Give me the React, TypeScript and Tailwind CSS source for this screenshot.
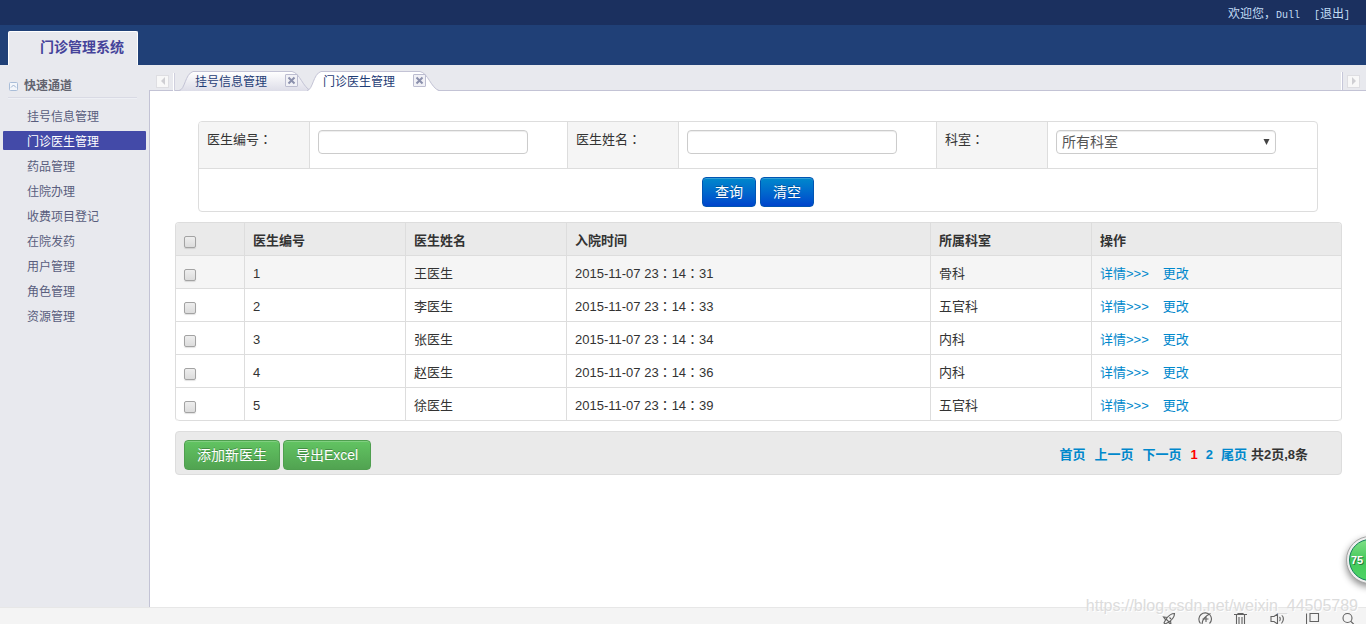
import React from 'react';

const navItems = [
  '挂号信息管理',
  '门诊医生管理',
  '药品管理',
  '住院办理',
  '收费项目登记',
  '在院发药',
  '用户管理',
  '角色管理',
  '资源管理',
];
const activeItem = '门诊医生管理';

const doctors = [
  { id: 1, name: '王医生', time: ['2015-11-07 23', '14', '31'], dept: '骨科' },
  { id: 2, name: '李医生', time: ['2015-11-07 23', '14', '33'], dept: '五官科' },
  { id: 3, name: '张医生', time: ['2015-11-07 23', '14', '34'], dept: '内科' },
  { id: 4, name: '赵医生', time: ['2015-11-07 23', '14', '36'], dept: '内科' },
  { id: 5, name: '徐医生', time: ['2015-11-07 23', '14', '39'], dept: '五官科' },
];

/* Full-width colon, centred in its cell */
function Colon() {
  return <span className="font-['Noto_Sans_CJK_TC',sans-serif] leading-none">：</span>;
}

function Tick({ label }: { label: string }) {
  return (
    <input
      type="checkbox"
      aria-label={label}
      className="mt-1 block size-3 appearance-none rounded-[2px] border border-[#a3a3a3] bg-linear-to-b from-[#eeeeee] to-[#dcdcdc] shadow-[0_1px_1px_rgba(0,0,0,0.12)] checked:bg-[#555] checked:bg-none"
    />
  );
}

function Tab({ label, active }: { label: string; active?: boolean }) {
  return (
    <div className={`relative -mr-1 flex h-5 w-[132px] items-end pl-4 ${active ? 'z-10' : ''}`}>
      <svg className="absolute inset-0" width="132" height="20" viewBox="0 0 132 20" aria-hidden="true">
        <defs>
          <linearGradient id="tabFill" x1="0" y1="0" x2="0" y2="1">
            <stop offset="0" stopColor="#ffffff" />
            <stop offset="1" stopColor="#dddde8" />
          </linearGradient>
        </defs>
        <path
          d="M0 20C6 19 6 3 14 .5H113C121 2 124 17 132 20Z"
          fill={active ? '#ffffff' : 'url(#tabFill)'}
        />
        <path d="M0 19.5C6 19 6 3 14 .5H113C121 2 124 17 132 19.5" fill="none" stroke="#c3c3d5" />
      </svg>
      <a href="#" className="relative text-xs leading-[18px] text-[#1f3d76]">
        {label}
      </a>
      <button
        type="button"
        aria-label={`关闭 ${label}`}
        className="absolute top-[3px] left-[106px] flex size-[13px] items-center justify-center rounded-[1px] border border-[#bcbdd0] bg-[#f1f1f6]"
      >
        <svg width="9" height="9" viewBox="0 0 9 9" aria-hidden="true">
          <path d="M1.500 1.500l6 6M7.500 1.500l-6 6" stroke="#8b90ac" strokeWidth="2" />
        </svg>
      </button>
    </div>
  );
}

function ScrollButton({ dir }: { dir: 'left' | 'right' }) {
  return (
    <button
      type="button"
      aria-label={dir === 'left' ? '向左' : '向右'}
      className="flex size-[13px] items-center justify-center border border-[#dedee2] bg-[#f8f8f8]"
    >
      <svg width="6" height="8" viewBox="0 0 6 8" aria-hidden="true">
        <path d={dir === 'left' ? 'M5 0v8L1 4z' : 'M1 0v8l4-4z'} fill="#cfcfd3" />
      </svg>
    </button>
  );
}

const fieldClass =
  'h-6 rounded-[4px] border border-[#cccccc] bg-white text-sm text-[#555] shadow-[inset_0_1px_1px_rgba(0,0,0,0.075)] outline-none';
const blueButton =
  'h-[30px] rounded-[4px] border border-[#0055b3] bg-linear-to-b from-[#0088cc] to-[#0044cc] px-3 text-sm leading-5 text-white shadow-[inset_0_1px_0_rgba(255,255,255,0.2)] [text-shadow:0_-1px_0_rgba(0,0,0,0.25)]';
const greenButton =
  'h-[30px] rounded-[4px] border border-[#4f9f4f] bg-linear-to-b from-[#62c462] to-[#51a351] px-3 text-sm leading-5 text-white shadow-[inset_0_1px_0_rgba(255,255,255,0.2)] [text-shadow:0_-1px_0_rgba(0,0,0,0.25)]';
const labelCell = 'border-l border-[#dddddd] bg-[#f5f5f5] px-2 pt-2 text-left align-top font-normal';
const inputCell = 'border-l border-[#dddddd] px-2 pt-2 align-top';

function SearchForm() {
  return (
    <form className="mr-6 ml-[23px]" onSubmit={(e) => e.preventDefault()}>
      <table className="w-full table-fixed border-separate border-spacing-0 overflow-hidden rounded-[4px] border border-[#dddddd]">
        <colgroup>
          <col className="w-[110px]" />
          <col className="w-[258px]" />
          <col className="w-[111px]" />
          <col className="w-[258px]" />
          <col className="w-[111px]" />
          <col />
        </colgroup>
        <tbody>
          <tr className="h-[46px]">
            <th className="bg-[#f5f5f5] px-2 pt-2 text-left align-top font-normal">
              <label htmlFor="doctor-id">医生编号<Colon /></label>
            </th>
            <td className={inputCell}>
              <input id="doctor-id" type="text" className={`${fieldClass} w-[210px] px-1.5`} />
            </td>
            <th className={labelCell}>
              <label htmlFor="doctor-name">医生姓名<Colon /></label>
            </th>
            <td className={inputCell}>
              <input id="doctor-name" type="text" className={`${fieldClass} w-[210px] px-1.5`} />
            </td>
            <th className={labelCell}>
              <label htmlFor="dept">科室<Colon /></label>
            </th>
            <td className={inputCell}>
              <div className="relative w-[220px]">
                <select id="dept" className={`${fieldClass} block w-full appearance-none px-[5px] leading-5`}>
                  <option>所有科室</option>
                  <option>骨科</option>
                  <option>内科</option>
                  <option>五官科</option>
                </select>
                <svg
                  className="pointer-events-none absolute top-2 right-1.5"
                  width="7"
                  height="7"
                  viewBox="0 0 7 7"
                  aria-hidden="true"
                >
                  <path d="M.5 1h6L3.500 7z" fill="#444" />
                </svg>
              </div>
            </td>
          </tr>
          <tr>
            <td colSpan={6} className="border-t border-[#dddddd] pt-2 pb-1">
              <div className="flex justify-center gap-1">
                <button type="submit" className={blueButton}>查询</button>
                <button type="reset" className={blueButton}>清空</button>
              </div>
            </td>
          </tr>
        </tbody>
      </table>
    </form>
  );
}

function DoctorTable() {
  const cell = 'h-[33px] border-b border-l border-[#dddddd] px-2 pt-1 pb-0';
  const first = 'h-[33px] border-b border-[#dddddd] px-2 pt-px pb-0';
  return (
    <table className="mt-2.5 w-full table-fixed border-separate border-spacing-0 overflow-hidden rounded-[4px] border border-b-0 border-[#dddddd]">
      <colgroup>
        <col className="w-[68px]" />
        <col className="w-[161px]" />
        <col className="w-[161px]" />
        <col />
        <col className="w-[161px]" />
        <col className="w-[250px]" />
      </colgroup>
      <thead>
        <tr className="bg-[#eaeaea] text-left">
          <th className={first}><Tick label="全选" /></th>
          <th className={cell}>医生编号</th>
          <th className={cell}>医生姓名</th>
          <th className={cell}>入院时间</th>
          <th className={cell}>所属科室</th>
          <th className={cell}>操作</th>
        </tr>
      </thead>
      <tbody>
        {doctors.map((d, i) => (
          <tr key={d.id} className={i === 0 ? 'bg-[#f5f5f5]' : 'bg-white'}>
            <td className={`${first} ${i === 4 ? 'rounded-bl-[4px]' : ''}`}><Tick label={d.name} /></td>
            <td className={cell}>{d.id}</td>
            <td className={cell}>{d.name}</td>
            <td className={cell}>
              {d.time[0]}<Colon />{d.time[1]}<Colon />{d.time[2]}
            </td>
            <td className={cell}>{d.dept}</td>
            <td className={`${cell} ${i === 4 ? 'rounded-br-[4px]' : ''}`}>
              <div className="flex gap-3.5 text-[#0088cc]">
                <a href="#">详情&gt;&gt;&gt;</a>
                <a href="#">更改</a>
              </div>
            </td>
          </tr>
        ))}
      </tbody>
    </table>
  );
}

function Toolbar() {
  return (
    <div className="mt-2.5 flex h-11 items-center justify-between rounded-[4px] border border-[#dddddd] bg-[#eaeaea] pt-[3px] pr-[33px] pl-2">
      <div className="flex gap-[3px]">
        <button type="button" className={greenButton}>添加新医生</button>
        <button type="button" className={greenButton}>导出Excel</button>
      </div>
      <nav aria-label="分页" className="flex font-bold text-[#0088cc]">
        <a href="#" className="mr-[9px]">首页</a>
        <a href="#" className="mr-[9px]">上一页</a>
        <a href="#" className="mr-[9px]">下一页</a>
        <span className="mr-2 text-[#ff0000]">1</span>
        <a href="#" className="mr-2">2</a>
        <a href="#" className="mr-1">尾页</a>
        <span className="text-[#333]">共2页,8条</span>
      </nav>
    </div>
  );
}

function Sidebar() {
  return (
    <aside className="w-[149px] shrink-0 pt-2.5">
      <div className="flex h-[22px] items-center pl-[9px]">
        <svg width="9" height="9" viewBox="0 0 9 9" fill="none" aria-hidden="true">
          <rect x=".5" y=".5" width="8" height="8" rx="1" fill="#f3f6fb" stroke="#a9bdd8" />
          <path d="M2 5.500L4.500 3L7 5.500" stroke="#9db2d0" />
        </svg>
        <h2 className="ml-1.5 text-xs font-bold text-[#62636f]">快速通道</h2>
      </div>
      <div className="mr-3 ml-2 border-t border-b border-t-[#d9dae4] border-b-[#eef0f5]" />
      <ul className="mt-1.5 px-[3px] text-xs text-[#595d7d]">
        {navItems.map((item) => (
          <li key={item} className="h-[25px] pt-px">
            <a
              href="#"
              className={`block h-[19px] w-full rounded-[1px] pl-6 leading-[22px] ${
                item === activeItem ? 'bg-[#434aa8] text-white' : ''
              }`}
            >
              {item}
            </a>
          </li>
        ))}
      </ul>
    </aside>
  );
}

function StatusBar() {
  const icons = [
    {
      name: '加速',
      d: 'M12.500 1.500C9 1.500 7 3 4 7l3 3c4-3 5.500-5 5.500-8.500zM5.500 5.500L1.500 5 4 8.500M8.500 8.500L9 12.500 6 10M4 7l-2 4 1 1 4-2M7.500 5.500l1.500 1.500',
    },
    {
      name: '浏览',
      d: 'M2.500 11.500A6.200 6.200 0 0112 3M11.500 11.500A6.200 6.200 0 0012 3M4 13C4 8 7 4 12.500 1.500M4.500 7h6M8 4v6',
    },
    { name: '清除', d: 'M0 2.500h13M4 2.500v-1h5v1M2.500 3v10h8V3M5 5v7M8 5v7' },
    { name: '声音', d: 'M7.500 2v10L4 9.500H1V4.500h3zM9.500 5c1 1 1 3 0 4M11.500 2.500c2.500 3 2.500 6 0 9' },
    { name: '窗口', d: 'M4 1.500h8.500v8H4zM.5 1.500v11h9' },
    { name: '搜索', d: 'M10 6A4.500 4.500 0 111 6a4.500 4.500 0 019 0zM9 9.500l4 4' },
  ];
  return (
    <footer className="flex h-[17px] shrink-0 items-start justify-end gap-[22px] overflow-hidden border-t border-[#e7e7e7] bg-[#f4f4f4] pt-1 pr-2.5">
      {icons.map((icon) => (
        <button key={icon.name} type="button" aria-label={icon.name} className="block size-3.5 shrink-0">
          <svg width="14" height="14" viewBox="0 0 14 14" fill="none" stroke="#626262" strokeWidth="1.1" aria-hidden="true">
            <path d={icon.d} />
          </svg>
        </button>
      ))}
    </footer>
  );
}

export default function App() {
  return (
    <div className="relative flex min-h-screen flex-col overflow-hidden bg-[#e8e9ee] font-['Liberation_Sans','Noto_Sans_CJK_SC',sans-serif] text-[13px] leading-5 text-[#333]">
      <header>
        <div className="flex h-[25px] items-center justify-end gap-3.5 bg-[#1b305f] pt-1 pr-4 text-xs text-[#c2dcf5]">
          <span>
            欢迎您，<span className="font-['Liberation_Mono',monospace] text-[10px]">Dull</span>
          </span>
          <a href="#" className="font-['Liberation_Mono','Noto_Sans_CJK_SC',monospace]">
            <span className="text-[10px]">[</span>退出<span className="text-[10px]">]</span>
          </a>
        </div>
        <div className="flex h-10 items-end bg-[#204077] pl-2">
          <h1 className="h-[34px] w-[130px] rounded-t-[2px] border border-b-0 border-white bg-[#e8e9ee] pl-[31px] text-sm leading-[30px] font-bold text-[#45439a]">
            门诊管理系统
          </h1>
        </div>
      </header>

      <div className="flex flex-1">
        <Sidebar />
        <div className="flex min-w-0 flex-1 flex-col">
          <div className="flex h-[26px] items-end justify-between border-b border-[#c3c3d5] pr-1.5 pl-[7px]">
            <div className="-mb-px flex items-end">
              <div className="flex h-[18px] items-center pb-0.5">
                <ScrollButton dir="left" />
              </div>
              <div className="mr-1 ml-1 h-[18px] w-0.5 border-r border-[#d0d0de] bg-white" />
              <Tab label="挂号信息管理" />
              <Tab label="门诊医生管理" active />
            </div>
            <div className="flex items-center gap-1">
              <div className="h-[18px] w-0.5 border-r border-[#c6c7d9] bg-white" />
              <ScrollButton dir="right" />
            </div>
          </div>
          <main className="flex-1 border-l border-[#c3c3d5] bg-white px-[25px] pt-[30px] pr-6 pb-10">
            <SearchForm />
            <DoctorTable />
            <Toolbar />
          </main>
        </div>
      </div>

      <StatusBar />

      <div className="absolute right-2 bottom-1.5 text-base leading-6 text-[#dcdcdc] [text-shadow:1px_1px_0_#ffffff]">
        https://blog.csdn.net/weixin_44505789
      </div>
      <div className="absolute -right-7 bottom-10 flex size-12 items-center rounded-full border border-[#a5a5a5] bg-[#eeeeee] p-0.5 shadow-[0_3px_7px_rgba(0,0,0,0.45)]">
        <div className="flex size-full items-center rounded-full border border-[#13805a] bg-linear-to-b from-[#7ddf86] via-[#43c95b] to-[#4fd366] pl-px text-[11px] font-bold text-white [text-shadow:1px_1px_0_#27793a]">
          75
        </div>
      </div>
    </div>
  );
}
